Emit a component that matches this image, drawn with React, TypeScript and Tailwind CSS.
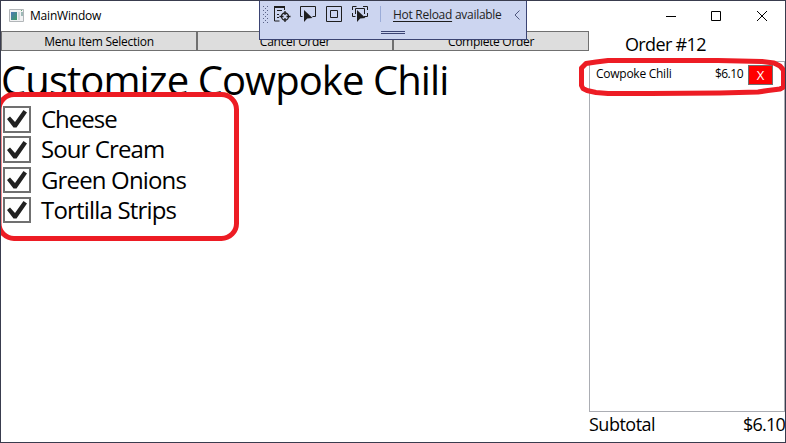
import type { ReactNode } from 'react';

const toppings = [
  { name: 'Cheese', tracking: 'tracking-[-1px]' },
  { name: 'Sour Cream', tracking: 'tracking-[-0.9px]' },
  { name: 'Green Onions', tracking: 'tracking-[-0.85px]' },
  { name: 'Tortilla Strips', tracking: 'tracking-[-0.82px]' },
];

function AppIcon() {
  return (
    <svg width="16" height="14" viewBox="0 0 16 14" className="shrink-0">
      <defs>
        <linearGradient id="pane" x1="0" y1="0" x2="1" y2="1">
          <stop offset="0" stopColor="#4b78b8" />
          <stop offset="1" stopColor="#3f9b63" />
        </linearGradient>
      </defs>
      <path d="M.5.5h14v12H.5z" fill="#f1f2f3" stroke="#b2b6b9" />
      <path d="M2 3h6v8H2z" fill="url(#pane)" />
      <path d="M9 3h2v8H9z" fill="#d4dadd" />
      <path d="M12 3h2v4h-2z" fill="#9db9b7" />
      <path d="M12 1h1v1h-1z" fill="#63a477" />
    </svg>
  );
}

function CommandButton({ children }: { children: ReactNode }) {
  return (
    <button className="flex h-5 flex-1 items-center justify-center border border-[#707070] bg-[#dddddd] pt-0.5 text-xs leading-5">
      {children}
    </button>
  );
}

function DebugToolbar() {
  return (
    <div className="absolute -top-px left-[258px] h-10 w-[268px] border border-[#3b4473] bg-[#ccd5f0] text-[#1e1e1e]">
      <svg width="266" height="38" viewBox="260 1 266 38" fill="none" stroke="#1e1e1e">
        <g stroke="#5b6489" strokeDasharray="1 3">
          <path d="M263.500 6v17M267.500 6v17" />
          <path d="M265.500 8v15" />
        </g>
        <path d="M274 7h11" strokeWidth="2" />
        <path d="M274.500 7v14h5M277 10.500h5M277 14.500h2M277 17.500h2M284.500 7v3" />
        <circle cx="285" cy="16.500" r="3.500" strokeWidth="1.3" />
        <path d="M285 11v4M285 18v4M279.500 16.500h4M286.500 16.500h4" strokeWidth="1.3" />
        <path d="M302.500 16.500h-2v-10h15v10h-3" />
        <path d="M304 10v12l3.200-3.400 5.300-.600z" fill="#1e1e1e" stroke="none" />
        <path d="M326.500 6.500h15v15h-15zM330.500 10.500h7v7h-7z" />
        <path d="M352.500 10V6.500h4M363 6.500h4.500V10M352.500 13v3.500h3M367.500 13v3.500H364M355.500 14V8.500h9V14" />
        <path d="M357 10v12l3.200-3.400 5.300-.600z" fill="#1e1e1e" stroke="none" />
        <path d="M380.500 6v16" stroke="#9bacd8" />
        <path d="m519.500 10.500-4.500 4.500 4.500 4.500" stroke="#4e567d" />
        <path d="M381 31.500h24M381 33.500h24" stroke="#3b4473" />
      </svg>
      <div className="absolute left-[133px] top-[5px] whitespace-nowrap text-xs leading-[18px] tracking-[-0.28px]">
        <span className="underline underline-offset-2">Hot Reload</span> available
      </div>
    </div>
  );
}

function Annotations() {
  return (
    <svg
      className="pointer-events-none absolute -left-px -top-px"
      width="786"
      height="443"
      viewBox="0 0 786 443"
      fill="none"
      stroke="#ed1c24"
      strokeWidth="5"
      strokeLinejoin="round"
    >
      <rect x="-1" y="94.500" width="237.500" height="144" rx="15" />
      <path d="M586 63.500l10-1.500 12-1.500h110l44 1 12 1.500 6 3 3.500 4v17l-3.500 2-12 1.500-10 1.500-38 1-70 .500h-42l-12-1-9-2-4-2-1.500-3V68z" />
    </svg>
  );
}

export default function App() {
  return (
    <div className="relative flex h-[443px] w-[786px] flex-col overflow-hidden border border-[#393c4e] bg-white font-['Open_Sans','Noto_Sans',sans-serif] text-black">
      <header className="flex h-[30px] shrink-0 items-center pl-2">
        <AppIcon />
        <span className="ml-[5px] text-xs tracking-[-0.2px]">MainWindow</span>
        <svg className="ml-auto mr-[17px]" width="102" height="12" viewBox="0 0 102 12" fill="none" stroke="#000">
          <path d="M0 6.500h10M45.500 1.500h9v9h-9zM91 1l10 10M101 1 91 11" />
        </svg>
      </header>
      <div className="flex min-h-0 flex-1">
        <main className="w-[588px] shrink-0">
          <nav className="flex">
            <CommandButton><span className="tracking-[-0.26px]">Menu Item Selection</span></CommandButton>
            <CommandButton><span className="tracking-[-0.26px]">Cancel Order</span></CommandButton>
            <CommandButton><span className="tracking-[-0.3px]">Complete Order</span></CommandButton>
          </nav>
          <h1 className="h-[55px] whitespace-nowrap pt-1 text-[40px] leading-[50px] tracking-[-0.92px]">Customize Cowpoke Chili</h1>
          <div className="flex flex-col pl-0.5">
            {toppings.map((topping) => (
              <label key={topping.name} className="flex h-[30.300px] items-start">
                <span className="flex h-[26.600px] w-7 items-center justify-center border-2 border-[#707070]">
                  <svg width="24" height="22" viewBox="0 0 24 22" className="shrink-0" fill="#212121">
                    <path d="M2 11 5 8.500 10 14 18.500 2 22 4.500 11.500 19.500H8.500z" />
                  </svg>
                </span>
                <span className={`ml-2.5 whitespace-nowrap text-2xl leading-[25px] ${topping.tracking}`}>{topping.name}</span>
              </label>
            ))}
          </div>
        </main>
        <aside className="flex w-[196px] shrink-0 flex-col">
          <h2 className="h-[30px] shrink-0 pl-9 text-lg leading-[26px] tracking-[-0.65px]">Order #12</h2>
          <div className="h-[351px] shrink-0 border border-[#abadb3] px-1.5 pt-[3px]">
            <div className="flex h-5 items-start text-xs">
              <span className="leading-[18px] tracking-[-0.26px]">Cowpoke Chili</span>
              <span className="ml-auto leading-[18px] tracking-[-0.5px]">$6.10</span>
              <button className="ml-[5px] mr-[5px] flex h-5 w-[25px] items-center justify-center border border-[#707070] bg-[#ff0000] pt-0.5 text-[13px] text-white">X</button>
            </div>
          </div>
          <div className="flex justify-between whitespace-nowrap text-lg leading-[25px]">
            <span className="tracking-[-0.5px]">Subtotal</span>
            <span className="tracking-[-0.8px]">$6.10</span>
          </div>
        </aside>
      </div>
      <DebugToolbar />
      <Annotations />
    </div>
  );
}
